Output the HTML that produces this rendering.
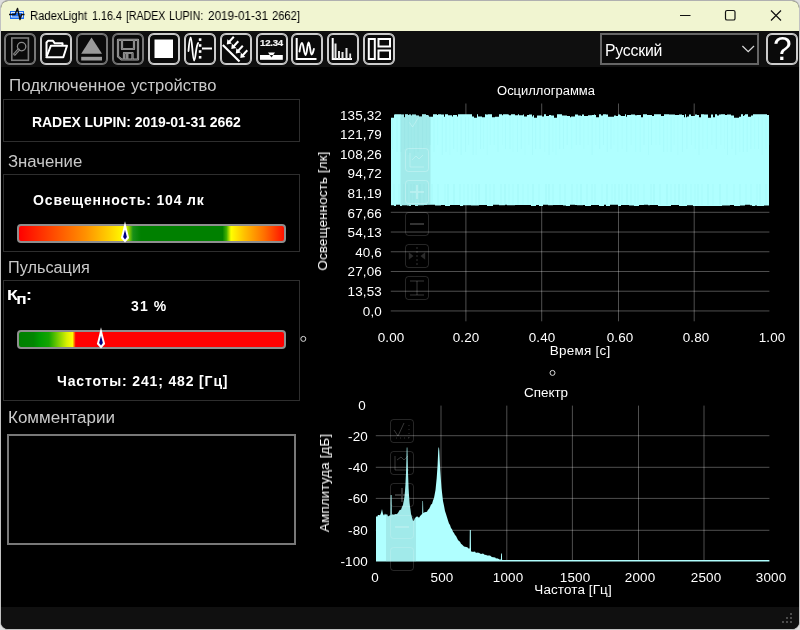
<!DOCTYPE html>
<html lang="ru">
<head>
<meta charset="utf-8">
<title>RadexLight</title>
<style>
html,body{margin:0;padding:0;}
body{width:800px;height:630px;overflow:hidden;background:#dedede;font-family:"Liberation Sans",sans-serif;position:relative;}
#win{position:absolute;left:0;top:0;width:798px;height:627.6px;border:1px solid #c2c2c2;border-top-color:#b0b0b0;border-radius:8px;overflow:hidden;background:#000;}
#win *{position:absolute;box-sizing:border-box;}
#title{left:0;top:0;width:798px;height:30px;background:#f1f5d1;}
#title .t{top:8px;font-size:12px;line-height:14px;color:#000;white-space:nowrap;transform-origin:0 0;}
#tb{left:0;top:30px;width:798px;height:36px;background:#0f0f0f;}
.btn{width:32px;height:32px;top:2px;}
.btn svg{left:0;top:0;width:32px;height:32px;}
.lbl{color:#c9c9c9;font-size:16px;line-height:18px;white-space:nowrap;transform-origin:0 0;}
.box{border:1px solid #2e2e2e;}
.bold{color:#fff;font-weight:bold;font-size:14px;line-height:16px;white-space:nowrap;}
.ct{color:#fff;font-size:12px;line-height:14px;white-space:nowrap;}
svg text{font-family:"Liberation Sans",sans-serif;}
.t,.lbl,.bold,.ct,.g{will-change:transform;}
</style>
</head>
<body>
<div id="win">
  <!-- title bar -->
  <div id="title">
    <svg style="left:7px;top:5px;width:20px;height:18px" viewBox="0 0 20 18">
      <rect x="2" y="5" width="14" height="8" fill="#1a6cf0"/>
      <rect x="3.5" y="6.5" width="11" height="4.5" fill="none" stroke="#dce9ff" stroke-width="1"/>
      <polyline points="1,8.5 7,8.5 9.5,2.5 12,13.5 13.5,8.5 16.5,8.5" fill="none" stroke="#111" stroke-width="1.4" stroke-linejoin="round"/>
    </svg>
    <div class="t" style="left:29.20px;transform:scaleX(0.9389);">RadexLight</div><div class="t" style="left:91.00px;transform:scaleX(0.8932);">1.16.4</div><div class="t" style="left:125.10px;transform:scaleX(0.8774);">[RADEX</div><div class="t" style="left:168.40px;transform:scaleX(0.8868);">LUPIN:</div><div class="t" style="left:206.50px;transform:scaleX(0.9775);">2019-01-31</div><div class="t" style="left:271.00px;transform:scaleX(0.9308);">2662]</div>
    <!-- window controls -->
    <svg style="left:659px;top:-1px;width:138px;height:30px" viewBox="0 0 138 30">
      <line x1="20" y1="15.5" x2="30.500" y2="15.5" stroke="#111" stroke-width="1.200"/>
      <rect x="65.500" y="10.500" width="9.500" height="9.500" rx="1.600" fill="none" stroke="#111" stroke-width="1.200"/>
      <path d="M111,10.500 L121,20.500 M121,10.500 L111,20.500" stroke="#111" stroke-width="1.200" fill="none"/>
    </svg>
  </div>

  <!-- toolbar -->
  <div id="tb">
    <div class="btn" style="left:2.8px"><svg viewBox="0 0 32 32"><rect x="1" y="1" width="30" height="30" rx="5" fill="#0a0a0a" stroke="#8c8c8c" stroke-width="2"/><rect x="1" y="1" width="30" height="30" rx="5" fill="none" stroke="#000" stroke-opacity="0.5" stroke-width="0.6"/><rect x="7.800" y="5" width="16.600" height="22.300" fill="none" stroke="#7c7c7c" stroke-width="1.600"/><circle cx="17.600" cy="13.600" r="4.200" fill="none" stroke="#8a8a8a" stroke-width="1.300"/><line x1="14.600" y1="16.700" x2="10.600" y2="21.200" stroke="#8a8a8a" stroke-width="2.800" stroke-linecap="round"/><line x1="14.300" y1="17.100" x2="10.700" y2="21.100" stroke="#0a0a0a" stroke-width="0.900" stroke-linecap="round"/></svg></div>
    <div class="btn" style="left:38.8px"><svg viewBox="0 0 32 32"><rect x="1" y="1" width="30" height="30" rx="5" fill="#0a0a0a" stroke="#f0f0f0" stroke-width="2"/><rect x="1" y="1" width="30" height="30" rx="5" fill="none" stroke="#000" stroke-opacity="0.5" stroke-width="0.6"/><path d="M6.500,23 L6.500,9.500 L8,7.800 L13,7.800 L14.800,10.300 L22.500,10.300 L22.500,12.500" fill="none" stroke="#fff" stroke-width="2" stroke-linejoin="round"/><path d="M6.300,24.300 L10.800,12.800 L27,12.800 L23.300,24.300 Z" fill="none" stroke="#fff" stroke-width="2" stroke-linejoin="round"/></svg></div>
    <div class="btn" style="left:74.8px"><svg viewBox="0 0 32 32"><rect x="1" y="1" width="30" height="30" rx="5" fill="#0a0a0a" stroke="#8c8c8c" stroke-width="2"/><rect x="1" y="1" width="30" height="30" rx="5" fill="none" stroke="#000" stroke-opacity="0.5" stroke-width="0.6"/><path d="M15.500,4.500 L26,20.800 L5.200,20.800 Z" fill="#9a9a9a"/><rect x="5.200" y="23.800" width="20.800" height="3.700" fill="#9a9a9a"/></svg></div>
    <div class="btn" style="left:110.8px"><svg viewBox="0 0 32 32"><rect x="1" y="1" width="30" height="30" rx="5" fill="#0a0a0a" stroke="#8c8c8c" stroke-width="2"/><rect x="1" y="1" width="30" height="30" rx="5" fill="none" stroke="#000" stroke-opacity="0.5" stroke-width="0.6"/><g fill="none" stroke="#a4a4a4" stroke-width="2.200" stroke-linejoin="round"><path d="M6,6.800 L26,6.800 L26,26.500 L9.500,26.500 L6,23.500 Z"/><path d="M10,6.800 L10,16 L22,16 L22,6.800"/><path d="M12,26.500 L12,20 L20.500,20 L20.500,26.500"/></g><g fill="none" stroke="#0a0a0a" stroke-width="0.500" stroke-opacity="0.6"><path d="M6,6.800 L26,6.800 L26,26.500 L9.500,26.500 L6,23.500 Z"/><path d="M10,6.800 L10,16 L22,16 L22,6.800"/><path d="M12,26.500 L12,20 L20.500,20 L20.500,26.500"/></g><rect x="13.500" y="21" width="3" height="5" fill="#8a8a8a"/></svg></div>
    <div class="btn" style="left:146.8px"><svg viewBox="0 0 32 32"><rect x="1" y="1" width="30" height="30" rx="5" fill="#0a0a0a" stroke="#f0f0f0" stroke-width="2"/><rect x="1" y="1" width="30" height="30" rx="5" fill="none" stroke="#000" stroke-opacity="0.5" stroke-width="0.6"/><rect x="6.500" y="6.500" width="18.500" height="18.500" fill="#fff"/></svg></div>
    <div class="btn" style="left:182.8px"><svg viewBox="0 0 32 32"><rect x="1" y="1" width="30" height="30" rx="5" fill="#0a0a0a" stroke="#f0f0f0" stroke-width="2"/><rect x="1" y="1" width="30" height="30" rx="5" fill="none" stroke="#000" stroke-opacity="0.5" stroke-width="0.6"/><path d="M4.500,18 C5.200,9 5.800,4.500 6.700,4.500 C8,4.500 8.600,27.500 10.200,27.500 C11.500,27.500 12,12 14.200,10" fill="none" stroke="#fff" stroke-width="1.800" stroke-linecap="round"/><rect x="14.800" y="5.300" width="2.600" height="2.600" fill="#fff"/><rect x="14.800" y="11.200" width="2.600" height="2.600" fill="#fff"/><rect x="14.800" y="17.200" width="2.600" height="2.600" fill="#fff"/><rect x="14.800" y="23" width="2.600" height="2.600" fill="#fff"/><rect x="18" y="14.500" width="10" height="2" fill="#fff"/></svg></div>
    <div class="btn" style="left:218.8px"><svg viewBox="0 0 32 32"><rect x="1" y="1" width="30" height="30" rx="5" fill="#0a0a0a" stroke="#f0f0f0" stroke-width="2"/><rect x="1" y="1" width="30" height="30" rx="5" fill="none" stroke="#000" stroke-opacity="0.5" stroke-width="0.6"/><line x1="2.800" y1="12" x2="19.500" y2="28.500" stroke="#fff" stroke-width="2.200"/><line x1="13.8" y1="3.8" x2="9.0" y2="9.0" stroke="#fff" stroke-width="2"/><path d="M6.8,11.4 L7.4,6.2 L11.9,10.4 Z" fill="#fff"/><line x1="18.3" y1="8.3" x2="13.5" y2="13.5" stroke="#fff" stroke-width="2"/><path d="M11.3,15.9 L11.9,10.7 L16.4,14.9 Z" fill="#fff"/><line x1="22.8" y1="12.8" x2="18.0" y2="18.0" stroke="#fff" stroke-width="2"/><path d="M15.8,20.4 L16.4,15.2 L20.9,19.4 Z" fill="#fff"/><line x1="27.3" y1="17.3" x2="22.5" y2="22.5" stroke="#fff" stroke-width="2"/><path d="M20.3,24.9 L20.9,19.7 L25.4,23.9 Z" fill="#fff"/></svg></div>
    <div class="btn" style="left:254.6px"><svg class="g" viewBox="0 0 32 32"><rect x="1" y="1" width="30" height="30" rx="5" fill="#0a0a0a" stroke="#f0f0f0" stroke-width="2"/><rect x="1" y="1" width="30" height="30" rx="5" fill="none" stroke="#000" stroke-opacity="0.5" stroke-width="0.6"/><text x="4" y="13.100" font-size="9.600" font-weight="bold" fill="#f4f4f4" stroke="#f4f4f4" stroke-width="0.2" letter-spacing="-0.2">12.34</text><rect x="4" y="22" width="22.800" height="4.800" fill="#fff"/><path d="M12,19.500 L19,19.500 L17.250,22 L13.750,22 Z" fill="#fff"/><path d="M13.750,22 L17.250,22 L15.500,24.500 Z" fill="#222"/></svg></div>
    <div class="btn" style="left:290.1px"><svg viewBox="0 0 32 32"><rect x="1" y="1" width="30" height="30" rx="5" fill="#0a0a0a" stroke="#f0f0f0" stroke-width="2"/><rect x="1" y="1" width="30" height="30" rx="5" fill="none" stroke="#000" stroke-opacity="0.5" stroke-width="0.6"/><path d="M5.700,5 L5.700,26 L25.500,26" fill="none" stroke="#fff" stroke-width="2"/><path d="M8.500,18.500 C9.300,13 10,10 11,10 C12.500,10 13,22 14.600,22 C16,22 16.300,9.500 17.600,9.500 C19,9.500 19.300,21.500 20.600,21.500 C21.800,21.500 22.300,18 22.900,16" fill="none" stroke="#fff" stroke-width="1.900" stroke-linecap="round"/></svg></div>
    <div class="btn" style="left:326.2px"><svg viewBox="0 0 32 32"><rect x="1" y="1" width="30" height="30" rx="5" fill="#0a0a0a" stroke="#f0f0f0" stroke-width="2"/><rect x="1" y="1" width="30" height="30" rx="5" fill="none" stroke="#000" stroke-opacity="0.5" stroke-width="0.6"/><path d="M5.700,5 L5.700,26 L25,26" fill="none" stroke="#fff" stroke-width="2"/><rect x="7.500" y="10.500" width="2" height="15" fill="#e6e6e6"/><rect x="11" y="18" width="2" height="8" fill="#e6e6e6"/><rect x="14.500" y="19" width="2" height="7" fill="#e6e6e6"/><rect x="18.500" y="15" width="2" height="11" fill="#e6e6e6"/><rect x="22.300" y="20.500" width="1.800" height="5.500" fill="#e6e6e6"/></svg></div>
    <div class="btn" style="left:362.0px"><svg viewBox="0 0 32 32"><rect x="1" y="1" width="30" height="30" rx="5" fill="#0a0a0a" stroke="#f0f0f0" stroke-width="2"/><rect x="1" y="1" width="30" height="30" rx="5" fill="none" stroke="#000" stroke-opacity="0.5" stroke-width="0.6"/><rect x="5.800" y="6" width="6" height="20" fill="none" stroke="#fff" stroke-width="2"/><rect x="15.500" y="6" width="11.500" height="7.500" fill="none" stroke="#fff" stroke-width="2"/><rect x="15.500" y="17.500" width="11.500" height="8.500" fill="none" stroke="#fff" stroke-width="2"/></svg></div>
    <!-- language combo -->
    <div style="left:599px;top:2px;width:159px;height:32px;border:2px solid #666;background:#0a0a0a;"></div>
    <div class="g" style="left:603.6px;top:10.8px;font-size:15.8px;line-height:18px;color:#fff;white-space:nowrap;letter-spacing:-0.2px;">Русский</div>
    <svg style="left:740px;top:13px;width:16px;height:10px" viewBox="0 0 16 10"><path d="M1.400,2 L7.200,7.600 L13,2" fill="none" stroke="#d4d4d4" stroke-width="1.300"/></svg>
    <!-- help -->
    <div class="btn" style="left:765px"><svg class="g" viewBox="0 0 32 32">
      <rect x="1" y="1" width="30" height="30" rx="5" fill="#0a0a0a" stroke="#f0f0f0" stroke-width="2"/><rect x="1" y="1" width="30" height="30" rx="5" fill="none" stroke="#000" stroke-opacity="0.5" stroke-width="0.6"/>
      <text x="16.300" y="27.200" font-size="33.500" fill="#fff" text-anchor="middle">?</text>
    </svg></div>
  </div>

  <!-- left panel -->
  <div class="lbl" style="left:8.10px;transform:scaleX(1.0577);top:76px;">Подключенное</div><div class="lbl" style="left:130.10px;transform:scaleX(1.0360);top:76px;">устройство</div>
  <div class="box" style="left:2px;top:98px;width:297px;height:43px;"></div>
  <div class="bold" style="left:31px;top:113px;letter-spacing:-0.05px;">RADEX LUPIN: 2019-01-31 2662</div>

  <div class="lbl" style="left:6.60px;transform:scaleX(1.0472);top:152px;">Значение</div>
  <div class="box" style="left:2px;top:173px;width:297px;height:78px;"></div>
  <div class="bold" style="left:32px;top:191px;letter-spacing:0.85px;">Освещенность: 104 лк</div>
  <div style="left:16px;top:223px;width:269px;height:19px;border:2px solid #8e8e8e;background-origin:border-box;border-radius:4px;background:linear-gradient(to right,#ff0000 0%,#ff3a00 10%,#ff9000 25%,#ffd000 34%,#fff000 38%,#ffff00 40%,#a0d800 41.300%,#189018 43%,#008000 46%,#008000 76.800%,#40b000 78.300%,#ffff00 80%,#ffc000 85%,#ff7000 92.500%,#ff1000 100%);"></div>
  <svg style="left:119px;top:221px;width:10px;height:22px" viewBox="0 0 10 22" overflow="visible"><path d="M5,-0.700 L9.100,16 L5,20.400 L0.900,16 Z" fill="#fff"/><path d="M5,7.700 L6.900,15 L5,17.600 L3.100,15 Z" fill="#000080"/></svg>

  <div class="lbl" style="left:6.80px;transform:scaleX(1.0164);top:258px;">Пульсация</div>
  <div class="box" style="left:2px;top:279px;width:297px;height:121px;"></div>
  <div class="bold" style="left:5.5px;top:285px;font-size:15.5px;line-height:18px;transform:scaleX(1.15);transform-origin:0 0;">К<span style="position:relative;font-size:15px;top:3.7px;left:-1.5px;letter-spacing:0">п</span><span style="position:relative;left:-2px">:</span></div>
  <div class="bold" style="left:129.5px;top:296.5px;letter-spacing:1.1px;">31 %</div>
  <div style="left:16px;top:329px;width:269px;height:19px;border:2px solid #8e8e8e;background-origin:border-box;border-radius:4px;background:linear-gradient(to right,#008000 0%,#008600 5.500%,#009c00 8%,#14a400 11.300%,#80d000 15%,#d8f000 18%,#ffff00 20.200%,#ff8000 20.800%,#ff0000 21.400%,#ff0000 100%);"></div>
  <svg style="left:95px;top:327px;width:10px;height:22px" viewBox="0 0 10 22" overflow="visible"><path d="M5,-0.700 L9.100,16 L5,20.400 L0.900,16 Z" fill="#fff"/><path d="M5,7.700 L6.900,15 L5,17.600 L3.100,15 Z" fill="#000080"/></svg>
  <div class="bold" style="left:55.5px;top:372px;letter-spacing:0.85px;">Частоты: 241; 482 [Гц]</div>

  <div class="lbl" style="left:6.80px;transform:scaleX(1.0618);top:408px;">Комментарии</div>
  <div style="left:6px;top:433px;width:289px;height:111px;border:2px solid #787878;background:#000;"></div>

  

  <!-- charts -->
  <svg style="left:-1px;top:-1px;width:800px;height:630px" viewBox="0 0 800 630">
    <circle cx="303.300" cy="338.900" r="2.500" fill="none" stroke="#d8d8d8" stroke-width="1"/><circle cx="552.500" cy="372.900" r="2.500" fill="none" stroke="#d8d8d8" stroke-width="1"/>
    <!-- oscillogram grid -->
    <g stroke="#fff" stroke-opacity="0.31" stroke-width="1">
      <line x1="465.9" y1="103.500" x2="465.9" y2="321.300"/>
      <line x1="541.7" y1="103.500" x2="541.7" y2="321.300"/>
      <line x1="618.5" y1="103.500" x2="618.5" y2="321.300"/>
      <line x1="694.2" y1="103.500" x2="694.2" y2="321.300"/>
      <line x1="390.800" y1="212.30" x2="769.400" y2="212.30"/>
      <line x1="390.800" y1="232.03" x2="769.400" y2="232.03"/>
      <line x1="390.800" y1="251.76" x2="769.400" y2="251.76"/>
      <line x1="390.800" y1="271.49" x2="769.400" y2="271.49"/>
      <line x1="390.800" y1="291.22" x2="769.400" y2="291.22"/>
      <line x1="390.800" y1="310.95" x2="769.400" y2="310.95"/>
    </g>
    <defs><path id="po" d="M391,117.8 L391,117.8 L392,117.8 L392,117.8 L393,117.8 L393,117.8 L394,117.8 L394,114.6 L395,114.6 L395,114.3 L396,114.3 L396,114.3 L397,114.3 L397,114.3 L398,114.3 L398,114.3 L399,114.3 L399,114.3 L400,114.3 L400,114.3 L401,114.3 L401,114.6 L402,114.6 L402,114.6 L403,114.6 L403,114.6 L404,114.6 L404,117.3 L405,117.3 L405,114.3 L406,114.3 L406,114.3 L407,114.3 L407,114.3 L408,114.3 L408,115.1 L409,115.1 L409,114.6 L410,114.6 L410,114.6 L411,114.6 L411,115.6 L412,115.6 L412,114.6 L413,114.6 L413,114.6 L414,114.6 L414,114.6 L415,114.6 L415,114.6 L416,114.6 L416,115.6 L417,115.6 L417,115.6 L418,115.6 L418,115.6 L419,115.6 L419,116.5 L420,116.5 L420,116.5 L421,116.5 L421,116.5 L422,116.5 L422,114.3 L423,114.3 L423,114.3 L424,114.3 L424,114.3 L425,114.3 L425,114.3 L426,114.3 L426,115.1 L427,115.1 L427,115.1 L428,115.1 L428,115.6 L429,115.6 L429,116.8 L430,116.8 L430,116.8 L431,116.8 L431,116.8 L432,116.8 L432,116.8 L433,116.8 L433,114.3 L434,114.3 L434,114.3 L435,114.3 L435,114.3 L436,114.3 L436,114.3 L437,114.3 L437,115.1 L438,115.1 L438,114.3 L439,114.3 L439,114.3 L440,114.3 L440,114.3 L441,114.3 L441,114.6 L442,114.6 L442,114.6 L443,114.6 L443,114.6 L444,114.6 L444,116.8 L445,116.8 L445,114.3 L446,114.3 L446,114.3 L447,114.3 L447,114.3 L448,114.3 L448,115.3 L449,115.3 L449,115.3 L450,115.3 L450,115.3 L451,115.3 L451,115.3 L452,115.3 L452,116.5 L453,116.5 L453,115.1 L454,115.1 L454,115.1 L455,115.1 L455,115.1 L456,115.1 L456,115.1 L457,115.1 L457,116.5 L458,116.5 L458,114.3 L459,114.3 L459,114.3 L460,114.3 L460,114.3 L461,114.3 L461,114.3 L462,114.3 L462,114.3 L463,114.3 L463,114.3 L464,114.3 L464,114.3 L465,114.3 L465,114.3 L466,114.3 L466,114.3 L467,114.3 L467,114.3 L468,114.3 L468,114.3 L469,114.3 L469,114.3 L470,114.3 L470,114.3 L471,114.3 L471,114.3 L472,114.3 L472,116.5 L473,116.5 L473,116.5 L474,116.5 L474,117.8 L475,117.8 L475,117.8 L476,117.8 L476,117.8 L477,117.8 L477,114.3 L478,114.3 L478,116.5 L479,116.5 L479,116.5 L480,116.5 L480,116.5 L481,116.5 L481,116.5 L482,116.5 L482,117.3 L483,117.3 L483,117.3 L484,117.3 L484,117.3 L485,117.3 L485,114.3 L486,114.3 L486,114.6 L487,114.6 L487,114.6 L488,114.6 L488,114.3 L489,114.3 L489,114.3 L490,114.3 L490,114.3 L491,114.3 L491,114.3 L492,114.3 L492,117.3 L493,117.3 L493,117.3 L494,117.3 L494,117.3 L495,117.3 L495,116.8 L496,116.8 L496,116.8 L497,116.8 L497,116.8 L498,116.8 L498,116.8 L499,116.8 L499,114.3 L500,114.3 L500,114.3 L501,114.3 L501,114.3 L502,114.3 L502,115.3 L503,115.3 L503,114.3 L504,114.3 L504,114.3 L505,114.3 L505,114.3 L506,114.3 L506,114.3 L507,114.3 L507,114.3 L508,114.3 L508,114.6 L509,114.6 L509,115.3 L510,115.3 L510,115.3 L511,115.3 L511,114.3 L512,114.3 L512,114.3 L513,114.3 L513,114.3 L514,114.3 L514,114.3 L515,114.3 L515,115.3 L516,115.3 L516,115.3 L517,115.3 L517,115.3 L518,115.3 L518,114.3 L519,114.3 L519,115.3 L520,115.3 L520,115.3 L521,115.3 L521,115.3 L522,115.3 L522,115.3 L523,115.3 L523,114.6 L524,114.6 L524,116.5 L525,116.5 L525,116.5 L526,116.5 L526,116.5 L527,116.5 L527,115.1 L528,115.1 L528,115.1 L529,115.1 L529,114.6 L530,114.6 L530,114.6 L531,114.6 L531,114.6 L532,114.6 L532,116.5 L533,116.5 L533,115.3 L534,115.3 L534,117.8 L535,117.8 L535,117.8 L536,117.8 L536,117.8 L537,117.8 L537,115.6 L538,115.6 L538,115.6 L539,115.6 L539,115.6 L540,115.6 L540,115.6 L541,115.6 L541,115.6 L542,115.6 L542,116.5 L543,116.5 L543,116.5 L544,116.5 L544,114.3 L545,114.3 L545,114.3 L546,114.3 L546,116.1 L547,116.1 L547,116.1 L548,116.1 L548,116.1 L549,116.1 L549,115.1 L550,115.1 L550,115.1 L551,115.1 L551,115.6 L552,115.6 L552,115.6 L553,115.6 L553,115.6 L554,115.6 L554,117.8 L555,117.8 L555,117.8 L556,117.8 L556,117.8 L557,117.8 L557,114.3 L558,114.3 L558,114.3 L559,114.3 L559,114.3 L560,114.3 L560,114.3 L561,114.3 L561,114.3 L562,114.3 L562,115.6 L563,115.6 L563,115.6 L564,115.6 L564,115.6 L565,115.6 L565,115.6 L566,115.6 L566,115.6 L567,115.6 L567,116.1 L568,116.1 L568,116.1 L569,116.1 L569,116.1 L570,116.1 L570,117.3 L571,117.3 L571,116.5 L572,116.5 L572,116.5 L573,116.5 L573,116.5 L574,116.5 L574,116.5 L575,116.5 L575,114.6 L576,114.6 L576,114.6 L577,114.6 L577,114.6 L578,114.6 L578,115.6 L579,115.6 L579,115.6 L580,115.6 L580,115.6 L581,115.6 L581,116.1 L582,116.1 L582,114.6 L583,114.6 L583,114.6 L584,114.6 L584,116.1 L585,116.1 L585,116.1 L586,116.1 L586,116.1 L587,116.1 L587,116.1 L588,116.1 L588,115.3 L589,115.3 L589,115.3 L590,115.3 L590,115.3 L591,115.3 L591,115.3 L592,115.3 L592,115.1 L593,115.1 L593,115.1 L594,115.1 L594,114.6 L595,114.6 L595,115.1 L596,115.1 L596,117.3 L597,117.3 L597,117.3 L598,117.3 L598,117.3 L599,117.3 L599,114.3 L600,114.3 L600,114.3 L601,114.3 L601,115.6 L602,115.6 L602,115.6 L603,115.6 L603,114.3 L604,114.3 L604,114.3 L605,114.3 L605,114.3 L606,114.3 L606,114.6 L607,114.6 L607,114.6 L608,114.6 L608,116.8 L609,116.8 L609,116.8 L610,116.8 L610,116.8 L611,116.8 L611,116.8 L612,116.8 L612,116.8 L613,116.8 L613,116.8 L614,116.8 L614,115.6 L615,115.6 L615,115.6 L616,115.6 L616,116.1 L617,116.1 L617,116.1 L618,116.1 L618,114.6 L619,114.6 L619,114.6 L620,114.6 L620,115.3 L621,115.3 L621,116.1 L622,116.1 L622,116.1 L623,116.1 L623,116.1 L624,116.1 L624,116.1 L625,116.1 L625,114.3 L626,114.3 L626,116.8 L627,116.8 L627,115.1 L628,115.1 L628,115.1 L629,115.1 L629,115.1 L630,115.1 L630,115.1 L631,115.1 L631,114.6 L632,114.6 L632,114.6 L633,114.6 L633,114.6 L634,114.6 L634,114.6 L635,114.6 L635,115.3 L636,115.3 L636,115.3 L637,115.3 L637,115.1 L638,115.1 L638,115.1 L639,115.1 L639,115.1 L640,115.1 L640,115.1 L641,115.1 L641,117.3 L642,117.3 L642,117.3 L643,117.3 L643,114.3 L644,114.3 L644,114.3 L645,114.3 L645,114.3 L646,114.3 L646,114.3 L647,114.3 L647,115.1 L648,115.1 L648,115.1 L649,115.1 L649,115.1 L650,115.1 L650,115.1 L651,115.1 L651,115.1 L652,115.1 L652,116.1 L653,116.1 L653,116.1 L654,116.1 L654,114.3 L655,114.3 L655,114.3 L656,114.3 L656,114.3 L657,114.3 L657,114.3 L658,114.3 L658,114.3 L659,114.3 L659,114.3 L660,114.3 L660,114.3 L661,114.3 L661,116.1 L662,116.1 L662,116.1 L663,116.1 L663,116.1 L664,116.1 L664,114.3 L665,114.3 L665,114.3 L666,114.3 L666,114.3 L667,114.3 L667,114.3 L668,114.3 L668,114.3 L669,114.3 L669,114.6 L670,114.6 L670,114.6 L671,114.6 L671,114.6 L672,114.6 L672,114.6 L673,114.6 L673,114.6 L674,114.6 L674,114.6 L675,114.6 L675,115.1 L676,115.1 L676,115.1 L677,115.1 L677,115.1 L678,115.1 L678,115.1 L679,115.1 L679,114.6 L680,114.6 L680,114.6 L681,114.6 L681,114.6 L682,114.6 L682,115.1 L683,115.1 L683,115.1 L684,115.1 L684,117.3 L685,117.3 L685,114.3 L686,114.3 L686,117.3 L687,117.3 L687,116.5 L688,116.5 L688,116.5 L689,116.5 L689,114.6 L690,114.6 L690,114.6 L691,114.6 L691,116.1 L692,116.1 L692,116.1 L693,116.1 L693,116.1 L694,116.1 L694,116.1 L695,116.1 L695,114.6 L696,114.6 L696,114.6 L697,114.6 L697,115.1 L698,115.1 L698,115.1 L699,115.1 L699,117.3 L700,117.3 L700,117.3 L701,117.3 L701,114.3 L702,114.3 L702,114.3 L703,114.3 L703,114.3 L704,114.3 L704,114.6 L705,114.6 L705,114.6 L706,114.6 L706,114.6 L707,114.6 L707,114.6 L708,114.6 L708,117.8 L709,117.8 L709,117.8 L710,117.8 L710,117.8 L711,117.8 L711,114.6 L712,114.6 L712,114.6 L713,114.6 L713,117.3 L714,117.3 L714,117.3 L715,117.3 L715,114.3 L716,114.3 L716,114.3 L717,114.3 L717,115.6 L718,115.6 L718,115.6 L719,115.6 L719,114.6 L720,114.6 L720,114.6 L721,114.6 L721,114.3 L722,114.3 L722,114.3 L723,114.3 L723,114.3 L724,114.3 L724,114.3 L725,114.3 L725,115.1 L726,115.1 L726,115.1 L727,115.1 L727,114.6 L728,114.6 L728,114.6 L729,114.6 L729,114.6 L730,114.6 L730,114.6 L731,114.6 L731,115.6 L732,115.6 L732,115.6 L733,115.6 L733,115.6 L734,115.6 L734,117.8 L735,117.8 L735,117.8 L736,117.8 L736,117.8 L737,117.8 L737,117.8 L738,117.8 L738,117.8 L739,117.8 L739,116.8 L740,116.8 L740,116.8 L741,116.8 L741,114.3 L742,114.3 L742,114.3 L743,114.3 L743,116.1 L744,116.1 L744,115.3 L745,115.3 L745,114.3 L746,114.3 L746,114.3 L747,114.3 L747,114.3 L748,114.3 L748,116.8 L749,116.8 L749,116.8 L750,116.8 L750,116.8 L751,116.8 L751,115.6 L752,115.6 L752,115.6 L753,115.6 L753,114.3 L754,114.3 L754,114.3 L755,114.3 L755,114.3 L756,114.3 L756,114.3 L757,114.3 L757,114.3 L758,114.3 L758,114.3 L759,114.3 L759,114.3 L760,114.3 L760,114.3 L761,114.3 L761,114.3 L762,114.3 L762,114.3 L763,114.3 L763,114.3 L764,114.3 L764,114.3 L765,114.3 L765,114.3 L766,114.3 L766,114.3 L767,114.3 L767,115.1 L768,115.1 L768,115.1 L769,115.1 L769,205.6 L768,205.6 L768,205.6 L767,205.6 L767,205.6 L766,205.6 L766,205.6 L765,205.6 L765,205.6 L764,205.6 L764,205.9 L763,205.9 L763,205.9 L762,205.9 L762,205.9 L761,205.9 L761,205.9 L760,205.9 L760,205.9 L759,205.9 L759,205.9 L758,205.9 L758,205.9 L757,205.9 L757,205.6 L756,205.6 L756,205.6 L755,205.6 L755,205.9 L754,205.9 L754,205.9 L753,205.9 L753,205.9 L752,205.9 L752,205.3 L751,205.3 L751,205.3 L750,205.3 L750,204.70000000000002 L749,204.70000000000002 L749,204.70000000000002 L748,204.70000000000002 L748,204.70000000000002 L747,204.70000000000002 L747,204.70000000000002 L746,204.70000000000002 L746,204.70000000000002 L745,204.70000000000002 L745,205.6 L744,205.6 L744,205.6 L743,205.6 L743,205.6 L742,205.6 L742,205.6 L741,205.6 L741,205.6 L740,205.6 L740,205.9 L739,205.9 L739,205.9 L738,205.9 L738,205.9 L737,205.9 L737,205.9 L736,205.9 L736,205.9 L735,205.9 L735,205.9 L734,205.9 L734,205.0 L733,205.0 L733,205.0 L732,205.0 L732,205.0 L731,205.0 L731,205.0 L730,205.0 L730,205.6 L729,205.6 L729,205.6 L728,205.6 L728,205.6 L727,205.6 L727,205.6 L726,205.6 L726,205.6 L725,205.6 L725,205.6 L724,205.6 L724,205.6 L723,205.6 L723,205.6 L722,205.6 L722,205.9 L721,205.9 L721,205.9 L720,205.9 L720,205.9 L719,205.9 L719,205.9 L718,205.9 L718,205.9 L717,205.9 L717,205.9 L716,205.9 L716,205.9 L715,205.9 L715,205.9 L714,205.9 L714,205.9 L713,205.9 L713,205.9 L712,205.9 L712,205.9 L711,205.9 L711,205.9 L710,205.9 L710,205.9 L709,205.9 L709,205.9 L708,205.9 L708,205.9 L707,205.9 L707,205.9 L706,205.9 L706,205.9 L705,205.9 L705,205.9 L704,205.9 L704,205.9 L703,205.9 L703,205.9 L702,205.9 L702,205.9 L701,205.9 L701,205.9 L700,205.9 L700,205.9 L699,205.9 L699,205.9 L698,205.9 L698,205.9 L697,205.9 L697,205.9 L696,205.9 L696,205.9 L695,205.9 L695,205.9 L694,205.9 L694,205.9 L693,205.9 L693,205.3 L692,205.3 L692,205.3 L691,205.3 L691,205.3 L690,205.3 L690,205.3 L689,205.3 L689,205.3 L688,205.3 L688,205.3 L687,205.3 L687,205.9 L686,205.9 L686,205.9 L685,205.9 L685,205.9 L684,205.9 L684,205.9 L683,205.9 L683,205.9 L682,205.9 L682,205.9 L681,205.9 L681,205.9 L680,205.9 L680,205.9 L679,205.9 L679,205.0 L678,205.0 L678,205.0 L677,205.0 L677,205.0 L676,205.0 L676,205.0 L675,205.0 L675,205.0 L674,205.0 L674,205.0 L673,205.0 L673,205.0 L672,205.0 L672,205.0 L671,205.0 L671,205.9 L670,205.9 L670,205.9 L669,205.9 L669,205.9 L668,205.9 L668,205.9 L667,205.9 L667,205.9 L666,205.9 L666,205.9 L665,205.9 L665,205.9 L664,205.9 L664,205.9 L663,205.9 L663,205.9 L662,205.9 L662,205.9 L661,205.9 L661,205.9 L660,205.9 L660,205.9 L659,205.9 L659,205.9 L658,205.9 L658,205.0 L657,205.0 L657,205.0 L656,205.0 L656,205.0 L655,205.0 L655,205.0 L654,205.0 L654,205.0 L653,205.0 L653,205.0 L652,205.0 L652,205.0 L651,205.0 L651,205.0 L650,205.0 L650,205.3 L649,205.3 L649,205.3 L648,205.3 L648,204.70000000000002 L647,204.70000000000002 L647,204.70000000000002 L646,204.70000000000002 L646,204.70000000000002 L645,204.70000000000002 L645,204.70000000000002 L644,204.70000000000002 L644,205.0 L643,205.0 L643,205.0 L642,205.0 L642,205.0 L641,205.0 L641,205.0 L640,205.0 L640,205.0 L639,205.0 L639,205.9 L638,205.9 L638,205.9 L637,205.9 L637,205.9 L636,205.9 L636,205.9 L635,205.9 L635,205.9 L634,205.9 L634,205.6 L633,205.6 L633,205.6 L632,205.6 L632,205.6 L631,205.6 L631,205.6 L630,205.6 L630,205.6 L629,205.6 L629,205.0 L628,205.0 L628,205.0 L627,205.0 L627,205.0 L626,205.0 L626,205.0 L625,205.0 L625,205.0 L624,205.0 L624,205.0 L623,205.0 L623,205.0 L622,205.0 L622,205.0 L621,205.0 L621,205.9 L620,205.9 L620,205.9 L619,205.9 L619,205.9 L618,205.9 L618,204.70000000000002 L617,204.70000000000002 L617,204.70000000000002 L616,204.70000000000002 L616,204.70000000000002 L615,204.70000000000002 L615,204.70000000000002 L614,204.70000000000002 L614,204.70000000000002 L613,204.70000000000002 L613,204.70000000000002 L612,204.70000000000002 L612,204.70000000000002 L611,204.70000000000002 L611,204.70000000000002 L610,204.70000000000002 L610,205.9 L609,205.9 L609,205.9 L608,205.9 L608,205.9 L607,205.9 L607,205.9 L606,205.9 L606,204.70000000000002 L605,204.70000000000002 L605,204.70000000000002 L604,204.70000000000002 L604,205.9 L603,205.9 L603,205.9 L602,205.9 L602,205.9 L601,205.9 L601,205.9 L600,205.9 L600,205.9 L599,205.9 L599,205.0 L598,205.0 L598,205.0 L597,205.0 L597,205.0 L596,205.0 L596,205.0 L595,205.0 L595,205.0 L594,205.0 L594,205.0 L593,205.0 L593,205.0 L592,205.0 L592,205.0 L591,205.0 L591,205.9 L590,205.9 L590,205.9 L589,205.9 L589,205.9 L588,205.9 L588,205.9 L587,205.9 L587,205.9 L586,205.9 L586,205.9 L585,205.9 L585,205.0 L584,205.0 L584,205.0 L583,205.0 L583,205.3 L582,205.3 L582,205.3 L581,205.3 L581,205.3 L580,205.3 L580,205.3 L579,205.3 L579,205.3 L578,205.3 L578,205.3 L577,205.3 L577,205.0 L576,205.0 L576,205.0 L575,205.0 L575,204.70000000000002 L574,204.70000000000002 L574,204.70000000000002 L573,204.70000000000002 L573,204.70000000000002 L572,204.70000000000002 L572,204.70000000000002 L571,204.70000000000002 L571,204.70000000000002 L570,204.70000000000002 L570,205.9 L569,205.9 L569,205.9 L568,205.9 L568,205.9 L567,205.9 L567,205.9 L566,205.9 L566,205.6 L565,205.6 L565,205.6 L564,205.6 L564,205.6 L563,205.6 L563,205.0 L562,205.0 L562,205.0 L561,205.0 L561,205.0 L560,205.0 L560,205.0 L559,205.0 L559,205.0 L558,205.0 L558,205.0 L557,205.0 L557,205.0 L556,205.0 L556,205.0 L555,205.0 L555,205.0 L554,205.0 L554,205.0 L553,205.0 L553,205.3 L552,205.3 L552,205.3 L551,205.3 L551,205.3 L550,205.3 L550,205.3 L549,205.3 L549,205.3 L548,205.3 L548,204.70000000000002 L547,204.70000000000002 L547,204.70000000000002 L546,204.70000000000002 L546,204.70000000000002 L545,204.70000000000002 L545,204.70000000000002 L544,204.70000000000002 L544,204.70000000000002 L543,204.70000000000002 L543,205.9 L542,205.9 L542,205.9 L541,205.9 L541,205.9 L540,205.9 L540,205.9 L539,205.9 L539,205.0 L538,205.0 L538,205.0 L537,205.0 L537,205.0 L536,205.0 L536,205.9 L535,205.9 L535,205.9 L534,205.9 L534,205.9 L533,205.9 L533,205.9 L532,205.9 L532,205.9 L531,205.9 L531,205.0 L530,205.0 L530,205.0 L529,205.0 L529,205.0 L528,205.0 L528,205.0 L527,205.0 L527,205.0 L526,205.0 L526,205.0 L525,205.0 L525,205.0 L524,205.0 L524,205.0 L523,205.0 L523,205.0 L522,205.0 L522,205.0 L521,205.0 L521,205.0 L520,205.0 L520,205.0 L519,205.0 L519,205.0 L518,205.0 L518,205.0 L517,205.0 L517,205.0 L516,205.0 L516,205.0 L515,205.0 L515,205.3 L514,205.3 L514,205.3 L513,205.3 L513,205.3 L512,205.3 L512,205.3 L511,205.3 L511,205.3 L510,205.3 L510,205.3 L509,205.3 L509,205.3 L508,205.3 L508,205.3 L507,205.3 L507,204.70000000000002 L506,204.70000000000002 L506,204.70000000000002 L505,204.70000000000002 L505,205.3 L504,205.3 L504,205.3 L503,205.3 L503,205.3 L502,205.3 L502,205.3 L501,205.3 L501,205.3 L500,205.3 L500,205.3 L499,205.3 L499,204.70000000000002 L498,204.70000000000002 L498,204.70000000000002 L497,204.70000000000002 L497,204.70000000000002 L496,204.70000000000002 L496,204.70000000000002 L495,204.70000000000002 L495,204.70000000000002 L494,204.70000000000002 L494,204.70000000000002 L493,204.70000000000002 L493,205.9 L492,205.9 L492,205.9 L491,205.9 L491,205.9 L490,205.9 L490,205.9 L489,205.9 L489,205.9 L488,205.9 L488,205.9 L487,205.9 L487,205.0 L486,205.0 L486,205.0 L485,205.0 L485,205.0 L484,205.0 L484,205.0 L483,205.0 L483,205.0 L482,205.0 L482,205.0 L481,205.0 L481,205.0 L480,205.0 L480,205.0 L479,205.0 L479,205.6 L478,205.6 L478,205.6 L477,205.6 L477,205.6 L476,205.6 L476,205.6 L475,205.6 L475,205.6 L474,205.6 L474,205.6 L473,205.6 L473,205.6 L472,205.6 L472,205.6 L471,205.6 L471,205.3 L470,205.3 L470,205.3 L469,205.3 L469,205.3 L468,205.3 L468,205.3 L467,205.3 L467,205.3 L466,205.3 L466,205.3 L465,205.3 L465,205.3 L464,205.3 L464,205.3 L463,205.3 L463,205.9 L462,205.9 L462,205.9 L461,205.9 L461,205.9 L460,205.9 L460,205.0 L459,205.0 L459,205.0 L458,205.0 L458,205.0 L457,205.0 L457,205.0 L456,205.0 L456,205.0 L455,205.0 L455,205.0 L454,205.0 L454,205.0 L453,205.0 L453,205.0 L452,205.0 L452,205.0 L451,205.0 L451,205.0 L450,205.0 L450,205.9 L449,205.9 L449,205.9 L448,205.9 L448,205.9 L447,205.9 L447,205.9 L446,205.9 L446,205.9 L445,205.9 L445,205.0 L444,205.0 L444,205.0 L443,205.0 L443,205.0 L442,205.0 L442,205.0 L441,205.0 L441,205.6 L440,205.6 L440,205.6 L439,205.6 L439,205.6 L438,205.6 L438,205.6 L437,205.6 L437,205.6 L436,205.6 L436,205.6 L435,205.6 L435,204.70000000000002 L434,204.70000000000002 L434,204.70000000000002 L433,204.70000000000002 L433,204.70000000000002 L432,204.70000000000002 L432,204.70000000000002 L431,204.70000000000002 L431,204.70000000000002 L430,204.70000000000002 L430,204.70000000000002 L429,204.70000000000002 L429,204.70000000000002 L428,204.70000000000002 L428,204.70000000000002 L427,204.70000000000002 L427,205.0 L426,205.0 L426,205.0 L425,205.0 L425,205.0 L424,205.0 L424,205.3 L423,205.3 L423,205.3 L422,205.3 L422,205.3 L421,205.3 L421,205.3 L420,205.3 L420,205.3 L419,205.3 L419,205.3 L418,205.3 L418,205.9 L417,205.9 L417,205.9 L416,205.9 L416,205.9 L415,205.9 L415,205.0 L414,205.0 L414,205.0 L413,205.0 L413,205.0 L412,205.0 L412,205.0 L411,205.0 L411,205.9 L410,205.9 L410,205.9 L409,205.9 L409,205.6 L408,205.6 L408,205.6 L407,205.6 L407,205.3 L406,205.3 L406,205.3 L405,205.3 L405,205.3 L404,205.3 L404,205.3 L403,205.3 L403,205.3 L402,205.3 L402,205.9 L401,205.9 L401,205.9 L400,205.9 L400,204.70000000000002 L399,204.70000000000002 L399,204.70000000000002 L398,204.70000000000002 L398,204.70000000000002 L397,204.70000000000002 L397,204.70000000000002 L396,204.70000000000002 L396,205.9 L395,205.9 L395,205.9 L394,205.9 L394,205.3 L393,205.3 L393,205.3 L392,205.3 L392,205.3 L391,205.3 Z"/><path id="ps" d="M376,561.5 L376.0,516.0 L377.0,517.1 L378.0,515.0 L379.0,515.0 L380.0,515.2 L381.0,513.0 L382.0,509.0 L383.0,514.0 L384.0,515.6 L385.0,513.4 L386.0,515.0 L387.0,514.1 L388.0,516.4 L389.0,516.0 L390.4,515.0 L390.7,495.0 L391.5,495.0 L391.8,515.0 L392.9,514.3 L394.0,515.0 L395.0,514.1 L396.0,514.3 L397.0,513.9 L398.0,513.0 L399.0,511.3 L400.0,509.8 L401.0,510.0 L402.0,507.1 L403.0,505.0 L404.5,497.0 L405.5,485.0 L406.3,466.0 L406.8,447.5 L407.3,447.5 L407.8,466.0 L408.5,488.0 L409.5,503.0 L411.0,514.0 L412.0,517.5 L413.0,521.0 L414.0,520.6 L415.0,518.0 L416.0,517.3 L417.0,516.3 L418.0,517.0 L419.0,517.7 L420.0,516.2 L421.0,515.0 L422.2,514.0 L422.5,501.0 L423.0,501.0 L423.3,513.0 L424.6,512.2 L426.0,512.0 L427.0,511.7 L428.0,509.7 L429.0,509.0 L430.0,507.0 L431.0,504.5 L432.0,504.0 L433.0,500.5 L434.0,498.0 L435.5,490.0 L436.7,478.0 L437.6,465.0 L438.2,451.0 L438.5,447.5 L439.0,447.5 L439.3,451.0 L440.2,470.0 L441.5,488.0 L443.0,501.0 L444.0,505.8 L445.0,511.0 L446.0,514.0 L447.0,517.2 L448.0,520.5 L449.0,523.5 L450.0,525.1 L451.0,528.0 L452.0,529.2 L453.0,531.8 L454.0,533.0 L455.0,535.0 L456.0,536.0 L457.0,537.9 L458.0,539.9 L459.0,541.0 L460.0,541.7 L461.0,543.8 L462.0,544.5 L463.0,545.6 L464.0,546.5 L465.0,546.8 L466.2,547.1 L467.3,547.3 L468.5,548.4 L469.6,548.4 L469.8,530.0 L470.8,530.0 L471.0,551.3 L472.0,551.7 L473.0,551.8 L474.0,551.8 L475.0,551.6 L476.0,552.9 L477.0,552.5 L478.0,552.8 L479.0,552.8 L480.0,553.6 L481.0,553.9 L482.0,553.7 L483.0,553.5 L484.0,554.3 L485.0,554.9 L486.0,554.8 L487.0,555.6 L488.0,555.5 L489.0,555.4 L490.0,555.5 L491.0,556.3 L492.0,557.2 L493.0,556.9 L494.0,557.4 L495.0,557.2 L496.0,558.4 L497.0,558.3 L498.3,558.7 L499.6,559.6 L500.9,559.5 L501.1,553.5 L501.9,553.5 L502.1,560.0 L504.0,560.0 L769.0,560.0 L769.4,560 L769.4,561.5 Z"/><clipPath id="co"><use href="#po"/></clipPath><clipPath id="cs"><use href="#ps"/></clipPath></defs>
    <use href="#po" fill="#b0ffff"/>
    <rect x="392.0" y="117" width="1" height="32" fill="#5fd0d8" opacity="0.07"/><rect x="396.5" y="117" width="1" height="35" fill="#5fd0d8" opacity="0.10"/><rect x="400.3" y="117" width="1" height="35" fill="#5fd0d8" opacity="0.08"/><rect x="404.1" y="117" width="1" height="32" fill="#5fd0d8" opacity="0.10"/><rect x="407.8" y="117" width="1" height="38" fill="#5fd0d8" opacity="0.10"/><rect x="410.8" y="117" width="1" height="32" fill="#5fd0d8" opacity="0.07"/><rect x="413.8" y="117" width="1" height="38" fill="#5fd0d8" opacity="0.07"/><rect x="417.6" y="117" width="1" height="35" fill="#5fd0d8" opacity="0.10"/><rect x="422.1" y="117" width="1" height="32" fill="#5fd0d8" opacity="0.10"/><rect x="425.9" y="117" width="1" height="28" fill="#5fd0d8" opacity="0.07"/><rect x="429.7" y="117" width="1" height="28" fill="#5fd0d8" opacity="0.08"/><rect x="433.5" y="117" width="1" height="35" fill="#5fd0d8" opacity="0.07"/><rect x="437.2" y="117" width="1" height="28" fill="#5fd0d8" opacity="0.07"/><rect x="441.7" y="117" width="1" height="38" fill="#5fd0d8" opacity="0.10"/><rect x="445.5" y="117" width="1" height="35" fill="#5fd0d8" opacity="0.10"/><rect x="449.3" y="117" width="1" height="38" fill="#5fd0d8" opacity="0.04"/><rect x="453.1" y="117" width="1" height="32" fill="#5fd0d8" opacity="0.08"/><rect x="456.9" y="117" width="1" height="35" fill="#5fd0d8" opacity="0.04"/><rect x="460.6" y="117" width="1" height="38" fill="#5fd0d8" opacity="0.10"/><rect x="465.1" y="117" width="1" height="35" fill="#5fd0d8" opacity="0.10"/><rect x="468.1" y="117" width="1" height="28" fill="#5fd0d8" opacity="0.07"/><rect x="472.6" y="117" width="1" height="38" fill="#5fd0d8" opacity="0.10"/><rect x="475.6" y="117" width="1" height="38" fill="#5fd0d8" opacity="0.04"/><rect x="480.1" y="117" width="1" height="32" fill="#5fd0d8" opacity="0.10"/><rect x="483.1" y="117" width="1" height="32" fill="#5fd0d8" opacity="0.07"/><rect x="486.9" y="117" width="1" height="38" fill="#5fd0d8" opacity="0.04"/><rect x="489.9" y="117" width="1" height="28" fill="#5fd0d8" opacity="0.04"/><rect x="493.7" y="117" width="1" height="28" fill="#5fd0d8" opacity="0.07"/><rect x="497.5" y="117" width="1" height="35" fill="#5fd0d8" opacity="0.07"/><rect x="502.0" y="117" width="1" height="28" fill="#5fd0d8" opacity="0.04"/><rect x="505.0" y="117" width="1" height="32" fill="#5fd0d8" opacity="0.08"/><rect x="509.5" y="117" width="1" height="32" fill="#5fd0d8" opacity="0.08"/><rect x="512.5" y="117" width="1" height="35" fill="#5fd0d8" opacity="0.04"/><rect x="517.0" y="117" width="1" height="35" fill="#5fd0d8" opacity="0.08"/><rect x="520.8" y="117" width="1" height="32" fill="#5fd0d8" opacity="0.10"/><rect x="524.5" y="117" width="1" height="38" fill="#5fd0d8" opacity="0.04"/><rect x="528.3" y="117" width="1" height="28" fill="#5fd0d8" opacity="0.04"/><rect x="532.1" y="117" width="1" height="38" fill="#5fd0d8" opacity="0.10"/><rect x="535.1" y="117" width="1" height="32" fill="#5fd0d8" opacity="0.08"/><rect x="539.6" y="117" width="1" height="32" fill="#5fd0d8" opacity="0.08"/><rect x="544.1" y="117" width="1" height="35" fill="#5fd0d8" opacity="0.04"/><rect x="548.6" y="117" width="1" height="38" fill="#5fd0d8" opacity="0.08"/><rect x="552.4" y="117" width="1" height="35" fill="#5fd0d8" opacity="0.04"/><rect x="555.4" y="117" width="1" height="38" fill="#5fd0d8" opacity="0.07"/><rect x="559.2" y="117" width="1" height="32" fill="#5fd0d8" opacity="0.08"/><rect x="562.9" y="117" width="1" height="32" fill="#5fd0d8" opacity="0.10"/><rect x="566.7" y="117" width="1" height="28" fill="#5fd0d8" opacity="0.08"/><rect x="571.2" y="117" width="1" height="32" fill="#5fd0d8" opacity="0.07"/><rect x="575.7" y="117" width="1" height="28" fill="#5fd0d8" opacity="0.10"/><rect x="579.5" y="117" width="1" height="28" fill="#5fd0d8" opacity="0.10"/><rect x="583.3" y="117" width="1" height="32" fill="#5fd0d8" opacity="0.04"/><rect x="587.8" y="117" width="1" height="28" fill="#5fd0d8" opacity="0.04"/><rect x="591.6" y="117" width="1" height="38" fill="#5fd0d8" opacity="0.10"/><rect x="595.3" y="117" width="1" height="28" fill="#5fd0d8" opacity="0.04"/><rect x="599.1" y="117" width="1" height="32" fill="#5fd0d8" opacity="0.08"/><rect x="602.9" y="117" width="1" height="28" fill="#5fd0d8" opacity="0.10"/><rect x="606.7" y="117" width="1" height="35" fill="#5fd0d8" opacity="0.10"/><rect x="610.5" y="117" width="1" height="32" fill="#5fd0d8" opacity="0.10"/><rect x="613.5" y="117" width="1" height="28" fill="#5fd0d8" opacity="0.04"/><rect x="617.2" y="117" width="1" height="35" fill="#5fd0d8" opacity="0.04"/><rect x="621.7" y="117" width="1" height="32" fill="#5fd0d8" opacity="0.04"/><rect x="626.2" y="117" width="1" height="35" fill="#5fd0d8" opacity="0.08"/><rect x="630.7" y="117" width="1" height="28" fill="#5fd0d8" opacity="0.04"/><rect x="635.2" y="117" width="1" height="35" fill="#5fd0d8" opacity="0.07"/><rect x="639.7" y="117" width="1" height="35" fill="#5fd0d8" opacity="0.07"/><rect x="643.5" y="117" width="1" height="28" fill="#5fd0d8" opacity="0.10"/><rect x="648.0" y="117" width="1" height="38" fill="#5fd0d8" opacity="0.07"/><rect x="651.0" y="117" width="1" height="28" fill="#5fd0d8" opacity="0.10"/><rect x="655.5" y="117" width="1" height="28" fill="#5fd0d8" opacity="0.04"/><rect x="659.3" y="117" width="1" height="28" fill="#5fd0d8" opacity="0.07"/><rect x="663.1" y="117" width="1" height="35" fill="#5fd0d8" opacity="0.08"/><rect x="666.9" y="117" width="1" height="35" fill="#5fd0d8" opacity="0.04"/><rect x="670.6" y="117" width="1" height="35" fill="#5fd0d8" opacity="0.08"/><rect x="673.6" y="117" width="1" height="28" fill="#5fd0d8" opacity="0.04"/><rect x="677.4" y="117" width="1" height="38" fill="#5fd0d8" opacity="0.04"/><rect x="681.9" y="117" width="1" height="35" fill="#5fd0d8" opacity="0.10"/><rect x="686.4" y="117" width="1" height="32" fill="#5fd0d8" opacity="0.10"/><rect x="690.9" y="117" width="1" height="28" fill="#5fd0d8" opacity="0.07"/><rect x="694.7" y="117" width="1" height="32" fill="#5fd0d8" opacity="0.07"/><rect x="698.5" y="117" width="1" height="38" fill="#5fd0d8" opacity="0.08"/><rect x="702.3" y="117" width="1" height="32" fill="#5fd0d8" opacity="0.04"/><rect x="706.8" y="117" width="1" height="32" fill="#5fd0d8" opacity="0.07"/><rect x="711.3" y="117" width="1" height="28" fill="#5fd0d8" opacity="0.04"/><rect x="715.8" y="117" width="1" height="32" fill="#5fd0d8" opacity="0.08"/><rect x="720.3" y="117" width="1" height="28" fill="#5fd0d8" opacity="0.04"/><rect x="724.0" y="117" width="1" height="32" fill="#5fd0d8" opacity="0.04"/><rect x="727.0" y="117" width="1" height="38" fill="#5fd0d8" opacity="0.10"/><rect x="731.5" y="117" width="1" height="32" fill="#5fd0d8" opacity="0.07"/><rect x="735.3" y="117" width="1" height="38" fill="#5fd0d8" opacity="0.10"/><rect x="739.1" y="117" width="1" height="35" fill="#5fd0d8" opacity="0.04"/><rect x="742.9" y="117" width="1" height="35" fill="#5fd0d8" opacity="0.08"/><rect x="746.7" y="117" width="1" height="35" fill="#5fd0d8" opacity="0.08"/><rect x="750.4" y="117" width="1" height="32" fill="#5fd0d8" opacity="0.10"/><rect x="754.2" y="117" width="1" height="32" fill="#5fd0d8" opacity="0.07"/><rect x="758.0" y="117" width="1" height="32" fill="#5fd0d8" opacity="0.08"/><rect x="761.8" y="117" width="1" height="38" fill="#5fd0d8" opacity="0.04"/><rect x="765.6" y="117" width="1" height="32" fill="#5fd0d8" opacity="0.07"/><rect x="768.6" y="117" width="1" height="28" fill="#5fd0d8" opacity="0.10"/><rect x="393.5" y="184" width="1" height="21" fill="#5fc8d0" opacity="0.08"/><rect x="398.5" y="184" width="1" height="21" fill="#5fc8d0" opacity="0.08"/><rect x="403.5" y="184" width="1" height="21" fill="#5fc8d0" opacity="0.12"/><rect x="406.5" y="184" width="1" height="21" fill="#5fc8d0" opacity="0.12"/><rect x="410.5" y="184" width="1" height="21" fill="#5fc8d0" opacity="0.08"/><rect x="413.5" y="184" width="1" height="21" fill="#5fc8d0" opacity="0.08"/><rect x="419.5" y="184" width="1" height="21" fill="#5fc8d0" opacity="0.16"/><rect x="423.5" y="184" width="1" height="21" fill="#5fc8d0" opacity="0.08"/><rect x="427.5" y="184" width="1" height="21" fill="#5fc8d0" opacity="0.16"/><rect x="431.5" y="184" width="1" height="21" fill="#5fc8d0" opacity="0.12"/><rect x="437.5" y="184" width="1" height="21" fill="#5fc8d0" opacity="0.12"/><rect x="444.5" y="184" width="1" height="21" fill="#5fc8d0" opacity="0.08"/><rect x="447.5" y="184" width="1" height="21" fill="#5fc8d0" opacity="0.16"/><rect x="453.5" y="184" width="1" height="21" fill="#5fc8d0" opacity="0.16"/><rect x="459.5" y="184" width="1" height="21" fill="#5fc8d0" opacity="0.12"/><rect x="463.5" y="184" width="1" height="21" fill="#5fc8d0" opacity="0.08"/><rect x="467.5" y="184" width="1" height="21" fill="#5fc8d0" opacity="0.12"/><rect x="471.5" y="184" width="1" height="21" fill="#5fc8d0" opacity="0.08"/><rect x="475.5" y="184" width="1" height="21" fill="#5fc8d0" opacity="0.12"/><rect x="478.5" y="184" width="1" height="21" fill="#5fc8d0" opacity="0.16"/><rect x="485.5" y="184" width="1" height="21" fill="#5fc8d0" opacity="0.16"/><rect x="489.5" y="184" width="1" height="21" fill="#5fc8d0" opacity="0.08"/><rect x="493.5" y="184" width="1" height="21" fill="#5fc8d0" opacity="0.12"/><rect x="500.5" y="184" width="1" height="21" fill="#5fc8d0" opacity="0.12"/><rect x="504.5" y="184" width="1" height="21" fill="#5fc8d0" opacity="0.16"/><rect x="508.5" y="184" width="1" height="21" fill="#5fc8d0" opacity="0.08"/><rect x="512.5" y="184" width="1" height="21" fill="#5fc8d0" opacity="0.08"/><rect x="517.5" y="184" width="1" height="21" fill="#5fc8d0" opacity="0.16"/><rect x="522.5" y="184" width="1" height="21" fill="#5fc8d0" opacity="0.08"/><rect x="527.5" y="184" width="1" height="21" fill="#5fc8d0" opacity="0.08"/><rect x="532.5" y="184" width="1" height="21" fill="#5fc8d0" opacity="0.16"/><rect x="538.5" y="184" width="1" height="21" fill="#5fc8d0" opacity="0.08"/><rect x="545.5" y="184" width="1" height="21" fill="#5fc8d0" opacity="0.16"/><rect x="548.5" y="184" width="1" height="21" fill="#5fc8d0" opacity="0.16"/><rect x="552.5" y="184" width="1" height="21" fill="#5fc8d0" opacity="0.12"/><rect x="559.5" y="184" width="1" height="21" fill="#5fc8d0" opacity="0.12"/><rect x="564.5" y="184" width="1" height="21" fill="#5fc8d0" opacity="0.12"/><rect x="571.5" y="184" width="1" height="21" fill="#5fc8d0" opacity="0.12"/><rect x="576.5" y="184" width="1" height="21" fill="#5fc8d0" opacity="0.08"/><rect x="580.5" y="184" width="1" height="21" fill="#5fc8d0" opacity="0.16"/><rect x="586.5" y="184" width="1" height="21" fill="#5fc8d0" opacity="0.12"/><rect x="591.5" y="184" width="1" height="21" fill="#5fc8d0" opacity="0.12"/><rect x="594.5" y="184" width="1" height="21" fill="#5fc8d0" opacity="0.12"/><rect x="601.5" y="184" width="1" height="21" fill="#5fc8d0" opacity="0.08"/><rect x="606.5" y="184" width="1" height="21" fill="#5fc8d0" opacity="0.16"/><rect x="611.5" y="184" width="1" height="21" fill="#5fc8d0" opacity="0.08"/><rect x="614.5" y="184" width="1" height="21" fill="#5fc8d0" opacity="0.12"/><rect x="618.5" y="184" width="1" height="21" fill="#5fc8d0" opacity="0.12"/><rect x="621.5" y="184" width="1" height="21" fill="#5fc8d0" opacity="0.08"/><rect x="626.5" y="184" width="1" height="21" fill="#5fc8d0" opacity="0.16"/><rect x="630.5" y="184" width="1" height="21" fill="#5fc8d0" opacity="0.12"/><rect x="634.5" y="184" width="1" height="21" fill="#5fc8d0" opacity="0.08"/><rect x="637.5" y="184" width="1" height="21" fill="#5fc8d0" opacity="0.08"/><rect x="643.5" y="184" width="1" height="21" fill="#5fc8d0" opacity="0.08"/><rect x="650.5" y="184" width="1" height="21" fill="#5fc8d0" opacity="0.12"/><rect x="653.5" y="184" width="1" height="21" fill="#5fc8d0" opacity="0.16"/><rect x="659.5" y="184" width="1" height="21" fill="#5fc8d0" opacity="0.12"/><rect x="666.5" y="184" width="1" height="21" fill="#5fc8d0" opacity="0.16"/><rect x="670.5" y="184" width="1" height="21" fill="#5fc8d0" opacity="0.08"/><rect x="674.5" y="184" width="1" height="21" fill="#5fc8d0" opacity="0.12"/><rect x="678.5" y="184" width="1" height="21" fill="#5fc8d0" opacity="0.16"/><rect x="682.5" y="184" width="1" height="21" fill="#5fc8d0" opacity="0.08"/><rect x="685.5" y="184" width="1" height="21" fill="#5fc8d0" opacity="0.12"/><rect x="690.5" y="184" width="1" height="21" fill="#5fc8d0" opacity="0.08"/><rect x="694.5" y="184" width="1" height="21" fill="#5fc8d0" opacity="0.08"/><rect x="697.5" y="184" width="1" height="21" fill="#5fc8d0" opacity="0.12"/><rect x="701.5" y="184" width="1" height="21" fill="#5fc8d0" opacity="0.08"/><rect x="707.5" y="184" width="1" height="21" fill="#5fc8d0" opacity="0.16"/><rect x="712.5" y="184" width="1" height="21" fill="#5fc8d0" opacity="0.08"/><rect x="719.5" y="184" width="1" height="21" fill="#5fc8d0" opacity="0.16"/><rect x="726.5" y="184" width="1" height="21" fill="#5fc8d0" opacity="0.08"/><rect x="733.5" y="184" width="1" height="21" fill="#5fc8d0" opacity="0.08"/><rect x="739.5" y="184" width="1" height="21" fill="#5fc8d0" opacity="0.12"/><rect x="745.5" y="184" width="1" height="21" fill="#5fc8d0" opacity="0.08"/><rect x="750.5" y="184" width="1" height="21" fill="#5fc8d0" opacity="0.08"/><rect x="756.5" y="184" width="1" height="21" fill="#5fc8d0" opacity="0.08"/><rect x="759.5" y="184" width="1" height="21" fill="#5fc8d0" opacity="0.12"/><rect x="765.5" y="184" width="1" height="21" fill="#5fc8d0" opacity="0.08"/>
    <!-- osc overlay toolbar -->
    <rect x="400.500" y="110" width="30" height="100" fill="#7fb8b8" opacity="0.3" clip-path="url(#co)"/>
    <g fill="none" stroke="#d8f8f8" stroke-opacity="0.42" stroke-width="1">
      <path d="M409.500,122.500 L412.500,127 L418.500,117.500"/>
      <rect x="405.500" y="148.500" width="23" height="23" rx="3"/>
      <path d="M410,153 L410,167 L424,167 M412,160 L416,156 L419,159 L423,155"/>
      <rect x="405.500" y="180.500" width="23" height="23" rx="3"/>
      <path d="M410,192 L424,192 M417,185 L417,199" stroke-width="2"/>
    </g>
    <g fill="none" stroke="#fff" stroke-opacity="0.15" stroke-width="1">
      <rect x="405.500" y="212.500" width="23" height="23" rx="3"/>
      <path d="M410,224 L424,224" stroke-width="2" stroke-opacity="0.2"/>
      <rect x="405.500" y="244.500" width="23" height="23" rx="3"/>
      <path d="M408.800,252.300 L413.500,256 L408.800,259.700 Z M425.200,252.300 L420.500,256 L425.200,259.700 Z" fill="#fff" fill-opacity="0.17" stroke="none"/>
      <path d="M417,247 L417,265" stroke-dasharray="2 2" stroke-opacity="0.2"/>
      <rect x="405.500" y="276.500" width="23" height="23" rx="3"/>
      <path d="M410,281 L424,281 M410,295 L424,295 M417,281 L417,295" stroke-opacity="0.22"/>
    </g>

    <!-- spectrum grid -->
    <g stroke="#fff" stroke-opacity="0.31" stroke-width="1">
      <line x1="441.0" y1="405.600" x2="441.0" y2="560.600"/>
      <line x1="506.8" y1="405.600" x2="506.8" y2="560.600"/>
      <line x1="572.4" y1="405.600" x2="572.4" y2="560.600"/>
      <line x1="638.5" y1="405.600" x2="638.5" y2="560.600"/>
      <line x1="704.0" y1="405.600" x2="704.0" y2="560.600"/>
      <line x1="375.800" y1="435.70" x2="769.400" y2="435.70"/>
      <line x1="375.800" y1="467.30" x2="769.400" y2="467.30"/>
      <line x1="375.800" y1="498.40" x2="769.400" y2="498.40"/>
      <line x1="375.800" y1="530.30" x2="769.400" y2="530.30"/>
    </g>
    <use href="#ps" fill="#b0ffff"/>
    <!-- spectrum overlay toolbar -->
    <rect x="386" y="440" width="30" height="125" fill="#7fb8b8" opacity="0.3" clip-path="url(#cs)"/>
    <g fill="none" stroke="#fff" stroke-opacity="0.15" stroke-width="1">
      <rect x="390.500" y="419.500" width="23" height="23" rx="3"/>
      <path d="M394,430 L398,436 L404,423" stroke-opacity="0.22"/>
      <path d="M409,425 L409,438 M396,438 L409,438" stroke-dasharray="1 3" stroke-opacity="0.2"/>
      <rect x="390.500" y="451.500" width="23" height="23" rx="3"/>
      <path d="M395,456 L395,470 L409,470 M397,460 L401,457 L404,460 L408,456" stroke-opacity="0.22"/>
      <rect x="390.500" y="483.500" width="23" height="23" rx="3"/>
      <path d="M395,495 L409,495 M402,488 L402,502" stroke-width="2" stroke-opacity="0.2"/>
      <rect x="390.500" y="515.500" width="23" height="23" rx="3"/>
      <path d="M395,527 L409,527" stroke-width="2" stroke-opacity="0.2"/>
      <rect x="390.500" y="547.500" width="23" height="23" rx="3"/>
    </g>
  </svg>

  <!-- chart text -->
  <div class="ct" style="left:464.50px;top:82.74px;width:160px;text-align:center;padding-left:0.00px;letter-spacing:0.00px;transform:scaleX(1.080);">Осциллограмма</div>
  <div class="ct" style="left:300.96px;top:107.54px;width:80px;text-align:right;letter-spacing:0.14px;transform:scaleX(1.120);transform-origin:100% 50%;">135,32</div>
  <div class="ct" style="left:300.96px;top:127.14px;width:80px;text-align:right;letter-spacing:0.14px;transform:scaleX(1.120);transform-origin:100% 50%;">121,79</div>
  <div class="ct" style="left:300.96px;top:146.74px;width:80px;text-align:right;letter-spacing:0.14px;transform:scaleX(1.120);transform-origin:100% 50%;">108,26</div>
  <div class="ct" style="left:300.96px;top:166.34px;width:80px;text-align:right;letter-spacing:0.14px;transform:scaleX(1.120);transform-origin:100% 50%;">94,72</div>
  <div class="ct" style="left:300.96px;top:185.94px;width:80px;text-align:right;letter-spacing:0.14px;transform:scaleX(1.120);transform-origin:100% 50%;">81,19</div>
  <div class="ct" style="left:300.96px;top:205.54px;width:80px;text-align:right;letter-spacing:0.14px;transform:scaleX(1.120);transform-origin:100% 50%;">67,66</div>
  <div class="ct" style="left:300.96px;top:225.14px;width:80px;text-align:right;letter-spacing:0.14px;transform:scaleX(1.120);transform-origin:100% 50%;">54,13</div>
  <div class="ct" style="left:300.96px;top:244.74px;width:80px;text-align:right;letter-spacing:0.14px;transform:scaleX(1.120);transform-origin:100% 50%;">40,6</div>
  <div class="ct" style="left:300.96px;top:264.34px;width:80px;text-align:right;letter-spacing:0.14px;transform:scaleX(1.120);transform-origin:100% 50%;">27,06</div>
  <div class="ct" style="left:300.96px;top:283.94px;width:80px;text-align:right;letter-spacing:0.14px;transform:scaleX(1.120);transform-origin:100% 50%;">13,53</div>
  <div class="ct" style="left:300.96px;top:303.54px;width:80px;text-align:right;letter-spacing:0.14px;transform:scaleX(1.120);transform-origin:100% 50%;">0,0</div>
  <div class="ct" style="left:242.00px;top:203.30px;width:160px;height:14px;text-align:center;padding-left:0.10px;letter-spacing:0.10px;transform:rotate(-90deg) scaleX(1.120);">Освещенность [лк]</div>
  <div class="ct" style="left:309.60px;top:329.74px;width:160px;text-align:center;padding-left:0.14px;letter-spacing:0.14px;transform:scaleX(1.120);">0.00</div>
  <div class="ct" style="left:385.40px;top:329.74px;width:160px;text-align:center;padding-left:0.14px;letter-spacing:0.14px;transform:scaleX(1.120);">0.20</div>
  <div class="ct" style="left:461.20px;top:329.74px;width:160px;text-align:center;padding-left:0.14px;letter-spacing:0.14px;transform:scaleX(1.120);">0.40</div>
  <div class="ct" style="left:538.90px;top:329.74px;width:160px;text-align:center;padding-left:0.14px;letter-spacing:0.14px;transform:scaleX(1.120);">0.60</div>
  <div class="ct" style="left:615.00px;top:329.74px;width:160px;text-align:center;padding-left:0.14px;letter-spacing:0.14px;transform:scaleX(1.120);">0.80</div>
  <div class="ct" style="left:691.00px;top:329.74px;width:160px;text-align:center;padding-left:0.14px;letter-spacing:0.14px;transform:scaleX(1.120);">1.00</div>
  <div class="ct" style="left:498.70px;top:342.64px;width:160px;text-align:center;padding-left:0.22px;letter-spacing:0.22px;transform:scaleX(1.120);">Время [с]</div>
  <div class="ct" style="left:464.70px;top:384.84px;width:160px;text-align:center;padding-left:0.00px;letter-spacing:0.00px;transform:scaleX(1.120);">Спектр</div>
  <div class="ct" style="left:285.06px;top:397.74px;width:80px;text-align:right;letter-spacing:0.14px;transform:scaleX(1.120);transform-origin:100% 50%;">0</div>
  <div class="ct" style="left:286.76px;top:428.94px;width:80px;text-align:right;letter-spacing:0.14px;transform:scaleX(1.120);transform-origin:100% 50%;">-20</div>
  <div class="ct" style="left:286.76px;top:460.14px;width:80px;text-align:right;letter-spacing:0.14px;transform:scaleX(1.120);transform-origin:100% 50%;">-40</div>
  <div class="ct" style="left:286.76px;top:491.34px;width:80px;text-align:right;letter-spacing:0.14px;transform:scaleX(1.120);transform-origin:100% 50%;">-60</div>
  <div class="ct" style="left:286.76px;top:522.54px;width:80px;text-align:right;letter-spacing:0.14px;transform:scaleX(1.120);transform-origin:100% 50%;">-80</div>
  <div class="ct" style="left:286.76px;top:553.74px;width:80px;text-align:right;letter-spacing:0.14px;transform:scaleX(1.120);transform-origin:100% 50%;">-100</div>
  <div class="ct" style="left:243.50px;top:474.90px;width:160px;height:14px;text-align:center;padding-left:0.10px;letter-spacing:0.10px;transform:rotate(-90deg) scaleX(1.120);">Амплитуда [дБ]</div>
  <div class="ct" style="left:294.00px;top:570.04px;width:160px;text-align:center;padding-left:0.14px;letter-spacing:0.14px;transform:scaleX(1.120);">0</div>
  <div class="ct" style="left:361.20px;top:570.04px;width:160px;text-align:center;padding-left:0.14px;letter-spacing:0.14px;transform:scaleX(1.120);">500</div>
  <div class="ct" style="left:427.40px;top:570.04px;width:160px;text-align:center;padding-left:0.14px;letter-spacing:0.14px;transform:scaleX(1.120);">1000</div>
  <div class="ct" style="left:493.60px;top:570.04px;width:160px;text-align:center;padding-left:0.14px;letter-spacing:0.14px;transform:scaleX(1.120);">1500</div>
  <div class="ct" style="left:559.00px;top:570.04px;width:160px;text-align:center;padding-left:0.14px;letter-spacing:0.14px;transform:scaleX(1.120);">2000</div>
  <div class="ct" style="left:624.50px;top:570.04px;width:160px;text-align:center;padding-left:0.14px;letter-spacing:0.14px;transform:scaleX(1.120);">2500</div>
  <div class="ct" style="left:690.40px;top:570.04px;width:160px;text-align:center;padding-left:0.14px;letter-spacing:0.14px;transform:scaleX(1.120);">3000</div>
  <div class="ct" style="left:491.80px;top:582.44px;width:160px;text-align:center;padding-left:0.11px;letter-spacing:0.11px;transform:scaleX(1.120);">Частота [Гц]</div>
  <!-- status bar -->
  <div style="left:0;top:605.8px;width:798px;height:23px;background:#101010;"></div>
  <svg style="left:780px;top:611px;width:14px;height:14px" viewBox="0 0 14 14" fill="#4c4c4c"><rect x="9" y="1" width="2" height="2"/><rect x="5" y="5" width="2" height="2"/><rect x="9" y="5" width="2" height="2"/><rect x="1" y="9" width="2" height="2"/><rect x="5" y="9" width="2" height="2"/><rect x="9" y="9" width="2" height="2"/></svg>
</div>
</body>
</html>
